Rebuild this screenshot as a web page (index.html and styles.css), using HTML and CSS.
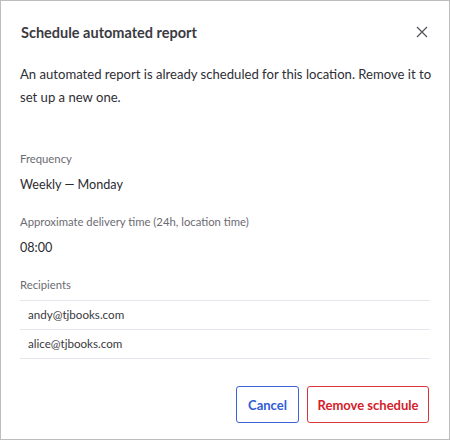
FILE: index.html
```html
<!DOCTYPE html>
<html lang="en">
<head>
    <meta charset="UTF-8">
    <meta name="viewport" content="width=device-width, initial-scale=1.0">
    <title>Schedule automated report</title>
    <link rel="stylesheet" href="styles.css">
</head>
<body>
    <div class="dialog">
        <div class="header">
            <h1>Schedule automated report</h1>
            <button class="close" aria-label="Close">
                <svg width="12" height="12" viewBox="0 0 12 12"><path d="M1 1L11 11M11 1L1 11" stroke="#55555c" stroke-width="1.3" fill="none"/></svg>
            </button>
        </div>
        <p class="intro">An automated report is already scheduled for this location. Remove it to set up a new one.</p>

        <div class="details">
            <div class="label">Frequency</div>
            <div class="value">Weekly — Monday</div>

            <div class="label">Approximate delivery time (24h, location time)</div>
            <div class="value">08:00</div>

            <div class="label">Recipients</div>
            <ul class="recipients">
                <li>andy@tjbooks.com</li>
                <li>alice@tjbooks.com</li>
            </ul>
        </div>

        <div class="actions">
            <button class="btn btn-cancel">Cancel</button>
            <button class="btn btn-remove">Remove schedule</button>
        </div>
    </div>
</body>
</html>
```

FILE: styles.css
```css
html, body { margin: 0; padding: 0; background: #fff; }
body { font-family: Lato, "Noto Sans", sans-serif; color: #2e2e35; }
.dialog { width: 448px; height: 438px; border: 1px solid #bdbdbd; }
.header { display: flex; align-items: center; justify-content: space-between; padding: 21px 20px 0 20px; height: 20px; }
.header h1 { margin: 0; font-size: 14.5px; font-weight: 700; color: #3b3b42; }
.close { background: none; border: 0; padding: 0; width: 12px; height: 12px; margin-right: 1px; display: flex; cursor: pointer; }
.intro { margin: 21px 8px 0 19px; font-size: 13.1px; line-height: 23px; color: #2e2e35; }
.details { margin: 0 19px; padding-top: 1px; }
.label { font-size: 11.3px; line-height: 16px; color: #6b6b73; margin-top: 19px; }
.details .label:first-child { margin-top: 41px; }
.value { font-size: 12.6px; line-height: 20px; margin-top: 8px; color: #2a2a30; }
.recipients { list-style: none; margin: 7px 0 0 0; padding: 0; border-top: 1px solid #e6e6ec; }
.recipients li { font-size: 11.6px; line-height: 28px; padding-left: 8px; border-bottom: 1px solid #e6e6ec; color: #3a3a40; }
.actions { display: flex; justify-content: flex-end; gap: 8px; margin: 27px 20px 0 20px; }
.btn { height: 37px; border-radius: 3px; background: #fff; font-family: inherit; font-size: 13px; font-weight: 700; padding: 0; white-space: nowrap; cursor: pointer; }
.btn-cancel { border: 1px solid #3c64d8; color: #2f5bd6; width: 63px; }
.btn-remove { border: 1px solid #d9363b; color: #d4202a; width: 122px; }
```
